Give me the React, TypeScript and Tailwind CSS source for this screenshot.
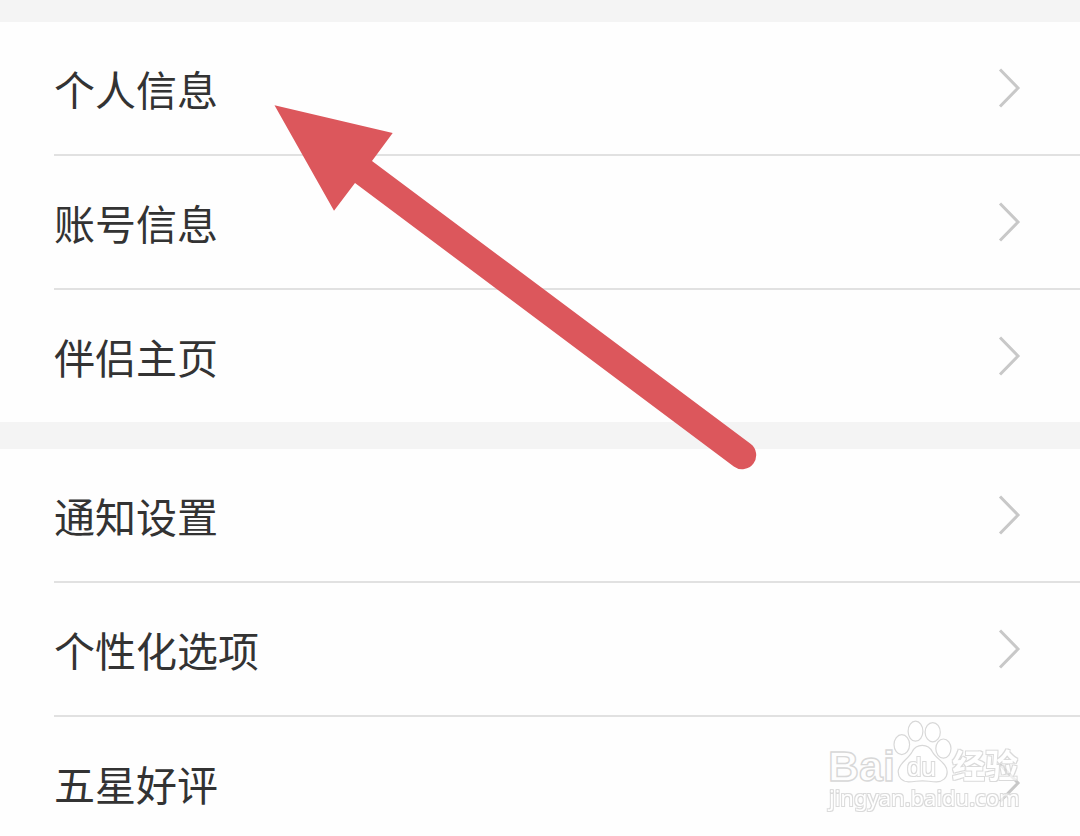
import clsx from "clsx";

const groups = [
	["个人信息", "账号信息", "伴侣主页"],
	["通知设置", "个性化选项", "五星好评"],
];

function Chevron() {
	return (
		<svg
			className="w-6 h-11 shrink-0"
			viewBox="0 0 24 44"
			fill="none"
			stroke="#c8c8c8"
			strokeWidth="3"
			aria-hidden="true"
		>
			<path d="M2 3.5 20 22 2 40.5" />
		</svg>
	);
}

function SettingsRow({ label, last }: { label: string; last: boolean }) {
	return (
		<li className="pl-[54px]">
			<button
				type="button"
				className={clsx(
					"flex w-full items-center justify-between pr-[58px] text-left",
					last ? "h-[132px]" : "h-[134px] border-b-2 border-[#e1e1e1]",
				)}
			>
				<span className="text-[41px] leading-[56px] text-[#333333]">
					{label}
				</span>
				<Chevron />
			</button>
		</li>
	);
}

function Arrow() {
	return (
		<svg
			className="absolute left-[274px] top-[105px] w-[484px] h-[366px] pointer-events-none"
			viewBox="274 105 484 366"
			aria-hidden="true"
		>
			<path
				d="M274.5 105.3 392.7 133 372 161 750.5 443.8A14 14 0 0 1 733.8 466.4L355 183 334 210.7Z"
				fill="#dc575c"
			/>
		</svg>
	);
}

function Watermark() {
	return (
		<svg
			className="absolute right-[50px] bottom-[20px] w-[210px] h-[101px] pointer-events-none"
			viewBox="0 0 210 101"
			fill="#ffffff"
		>
			<defs>
				{/* thin grey ring around white lettering */}
				<filter id="ring" colorInterpolationFilters="sRGB">
					<feMorphology in="SourceAlpha" operator="dilate" radius="1" />
					<feComposite in2="SourceAlpha" operator="out" result="edge" />
					<feFlood floodColor="#dadada" />
					<feComposite in2="edge" operator="in" result="line" />
					<feComponentTransfer in="SourceGraphic" result="body">
						<feFuncA type="linear" slope="0.7" />
					</feComponentTransfer>
					<feMerge>
						<feMergeNode in="body" />
						<feMergeNode in="line" />
					</feMerge>
				</filter>
			</defs>
			<g stroke="#d8d8d8" strokeWidth="1.2" fillOpacity="0.6">
				<ellipse cx="81.8" cy="29.6" rx="7.8" ry="10" />
				<ellipse cx="95.5" cy="16.2" rx="7.4" ry="10" />
				<ellipse cx="112.7" cy="17.2" rx="7.6" ry="9.6" />
				<ellipse cx="123.4" cy="33.6" rx="7.6" ry="9.6" />
				<path d="M102.3 30.4C107 30.4 110.5 33 112.5 37C116.5 44.5 127.2 48 127.2 57C127.2 63 122.5 66.8 116.5 66.8C111 66.8 107 65.8 102.5 65.8C98 65.8 94 66.8 88.5 66.8C82 66.8 78.2 62.5 78.2 56.8C78.2 48.5 88 44.5 92 37C94 33 97.5 30.4 102.3 30.4Z" />
			</g>
			<text
				x="8"
				y="66"
				fillOpacity="0.6"
				stroke="#d8d8d8"
				strokeWidth="1.4"
				className="font-['Liberation_Sans',sans-serif] text-[43px] font-bold"
			>
				Bai
			</text>
			<text
				x="87"
				y="61"
				filter="url(#ring)"
				className="font-['Liberation_Sans',sans-serif] text-[26px]"
			>
				du
			</text>
			<text
				x="132"
				y="63"
				filter="url(#ring)"
				className="font-['Noto_Sans_CJK_SC',sans-serif] text-[33px] font-bold"
			>
				经验
			</text>
			<text
				x="9"
				y="91"
				filter="url(#ring)"
				className="font-['Noto_Sans',sans-serif] text-[22px]"
			>
				jingyan.baidu.com
			</text>
		</svg>
	);
}

export default function App() {
	return (
		<main className="relative h-screen overflow-hidden bg-[#f4f4f4] pt-[22px] font-['Noto_Sans_CJK_SC',sans-serif]">
			<div className="flex flex-col gap-[27px]">
				{groups.map((rows) => (
					<ul key={rows[0]} className="bg-[#fefefe]">
						{rows.map((label, i) => (
							<SettingsRow
								key={label}
								label={label}
								last={i === rows.length - 1}
							/>
						))}
					</ul>
				))}
			</div>
			<Arrow />
			<Watermark />
		</main>
	);
}
